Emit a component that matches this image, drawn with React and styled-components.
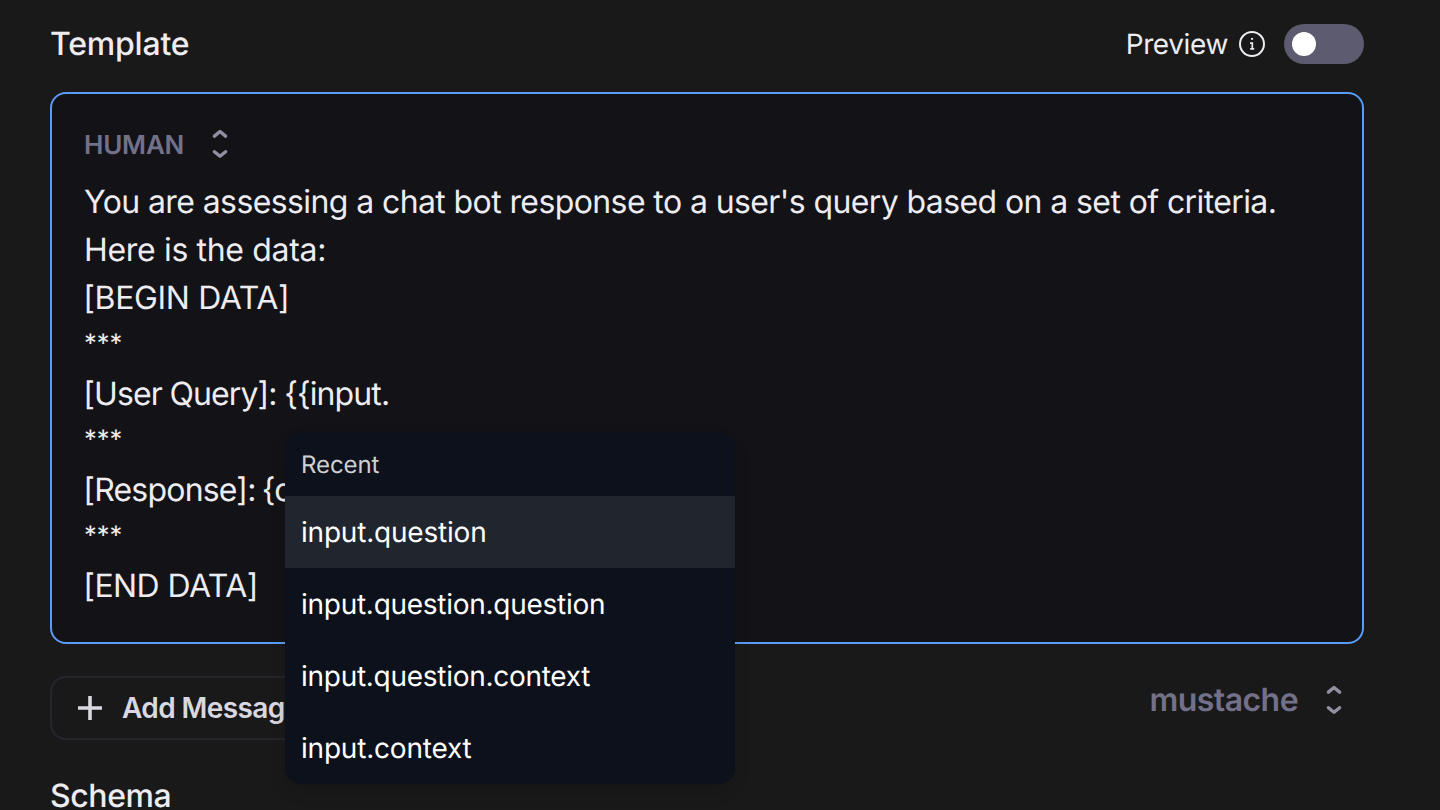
import React from "react";
import styled, { createGlobalStyle } from "styled-components";

const GlobalStyle = createGlobalStyle`
  * { box-sizing: border-box; }
  html, body { margin: 0; height: 100%; overflow: hidden; }
  body {
    background: #191919;
    color: #ececf1;
    font-family: Inter, "Liberation Sans", sans-serif;
    text-rendering: geometricPrecision;
    -webkit-font-smoothing: antialiased;
  }
`;

const Page = styled.main`
  position: relative;
  width: 1440px;
  height: 810px;
  overflow: hidden;
  padding: 24px 76px 0 50px;
`;

const Header = styled.header`
  display: flex;
  align-items: center;
  justify-content: space-between;
  height: 40px;
  margin-bottom: 28px;
`;

const Heading = styled.h2`
  margin: 0;
  font-size: 32px;
  font-weight: 480;
  line-height: 40px;
  letter-spacing: ${(p) => p.$tracking}px;
`;

const PreviewControl = styled.div`
  display: flex;
  align-items: center;
`;

const PreviewLabel = styled.span`
  margin-right: 10px;
  font-size: 28px;
  line-height: 40px;
  letter-spacing: -0.38px;
`;

const InfoSvg = styled.svg`
  display: block;
  width: 28px;
  height: 28px;
  margin-right: 18px;
`;

const Toggle = styled.button`
  display: flex;
  align-items: center;
  width: 80px;
  height: 40px;
  padding: 0 8px;
  border: 0;
  border-radius: 20px;
  background: #5c5b70;
`;

const Knob = styled.span`
  width: 24px;
  height: 24px;
  border-radius: 50%;
  background: #fff;
`;

const Editor = styled.section`
  height: 552px;
  padding: 32px;
  border: 2px solid #5b9bf5;
  border-radius: 16px;
  background: #131217;
`;

const RoleSelect = styled.div`
  display: flex;
  align-items: center;
  gap: 25.5px;
  height: 36px;
  margin-bottom: 16px;
`;

const RoleName = styled.span`
  padding-top: 2px;
  color: #737189;
  font-size: 26px;
  font-weight: 560;
  letter-spacing: -0.2px;
`;

const Line = styled.div`
  height: 48px;
  font-size: 32px;
  line-height: 48px;
  white-space: pre;
  letter-spacing: ${(p) => p.$tracking}px;
  word-spacing: ${(p) => p.$wordGap || 0}px;
`;

const Bracketed = styled(Line)`
  margin-left: -0.7px;
`;

const Stars = styled(Line)`
  font-size: 25.5px;
  line-height: 44px;
`;

const Footer = styled.div`
  display: flex;
  align-items: flex-start;
  justify-content: space-between;
  height: 64px;
  margin: 32px 0 36px;
`;

const AddButton = styled.button`
  display: flex;
  align-items: center;
  gap: 20px;
  width: 280px;
  height: 64px;
  padding: 0 26px;
  border: 2px solid #26252c;
  border-radius: 16px;
  background: transparent;
  color: #d9d8e0;
  font-family: inherit;
  font-size: 28px;
  font-weight: 580;
  letter-spacing: -0.6px;
  white-space: nowrap;
`;

const PlusSvg = styled.svg`
  flex: none;
  width: 24px;
  height: 24px;
`;

const FormatSelect = styled.div`
  display: flex;
  align-items: center;
  gap: 26px;
  height: 48px;
  padding-right: 20px;
  color: #737189;
  font-size: 32px;
  font-weight: 570;
  line-height: 46px;
  letter-spacing: -0.57px;
`;

const ArrowsSvg = styled.svg`
  flex: none;
  width: 20px;
  height: 32px;
`;

const Menu = styled.div`
  position: absolute;
  left: 285px;
  top: 432px;
  width: 450px;
  overflow: hidden;
  border-radius: 16px;
  background: #0d111b;
  box-shadow: 0 8px 16px rgba(0, 0, 0, 0.12);
`;

const MenuTitle = styled.div`
  height: 64px;
  padding-left: 16px;
  color: #cfd0d4;
  font-size: 24px;
  line-height: 65px;
  letter-spacing: -0.09px;
`;

const MenuItem = styled.div`
  height: 72px;
  padding-left: 16px;
  background: ${(p) => (p.$active ? "#21252e" : "transparent")};
  color: #fff;
  font-size: 28px;
  font-weight: 440;
  line-height: 73px;
  letter-spacing: ${(p) => p.$tracking}px;
`;

const Arrows = () => (
  <ArrowsSvg viewBox="0 0 20 32" fill="none" stroke="#9190a2" strokeWidth="3.4" strokeLinecap="round" strokeLinejoin="round">
    <path d="M4.4 8.1 10 3.5l5.6 4.6M4.4 23.7 10 28.3l5.6-4.6" />
  </ArrowsSvg>
);

const Info = () => (
  <InfoSvg viewBox="0 0 28 28" fill="none" stroke="#ececf1" strokeWidth="2">
    <circle cx="14" cy="14" r="12" />
    <path d="M13 8.9h2.1M12 13.1h2.3v5.4M12.2 18.9h4" strokeWidth="1.7" />
  </InfoSvg>
);

const Plus = () => (
  <PlusSvg viewBox="0 0 24 24" stroke="#d9d8e0" strokeWidth="3.6">
    <path d="M12 0v24M0 12h24" />
  </PlusSvg>
);

const suggestions = [
  { path: "input.question", tracking: -0.2 },
  { path: "input.question.question", tracking: -0.27 },
  { path: "input.question.context", tracking: -0.28 },
  { path: "input.context", tracking: -0.2 },
];

export default function App() {
  return (
    <>
      <GlobalStyle />
      <Page>
        <Header>
          <Heading $tracking={-0.2}>Template</Heading>
          <PreviewControl>
            <PreviewLabel>Preview</PreviewLabel>
            <Info />
            <Toggle aria-label="Preview">
              <Knob />
            </Toggle>
          </PreviewControl>
        </Header>
        <Editor>
          <RoleSelect>
            <RoleName>HUMAN</RoleName>
            <Arrows />
          </RoleSelect>
          <Line $tracking={-0.6}>
            You are assessing a chat bot response to a user's query based on a set of criteria.
          </Line>
          <Line $tracking={-0.33}>Here is the data:</Line>
          <Bracketed $tracking={-0.37}>[BEGIN DATA]</Bracketed>
          <Stars $tracking={0}>***</Stars>
          <Bracketed $tracking={-0.89} $wordGap={-0.6}>{"[User Query]: {{input."}</Bracketed>
          <Stars $tracking={0}>***</Stars>
          <Bracketed $tracking={-0.8} $wordGap={-2}>{"[Response]: {o"}</Bracketed>
          <Stars $tracking={0}>***</Stars>
          <Bracketed $tracking={-0.57}>[END DATA]</Bracketed>
        </Editor>
        <Footer>
          <AddButton>
            <Plus />
            Add Message
          </AddButton>
          <FormatSelect>
            mustache
            <Arrows />
          </FormatSelect>
        </Footer>
        <Heading $tracking={-0.42}>Schema</Heading>
        <Menu>
          <MenuTitle>Recent</MenuTitle>
          {suggestions.map((s, i) => (
            <MenuItem key={s.path} $active={i === 0} $tracking={s.tracking}>
              {s.path}
            </MenuItem>
          ))}
        </Menu>
      </Page>
    </>
  );
}
